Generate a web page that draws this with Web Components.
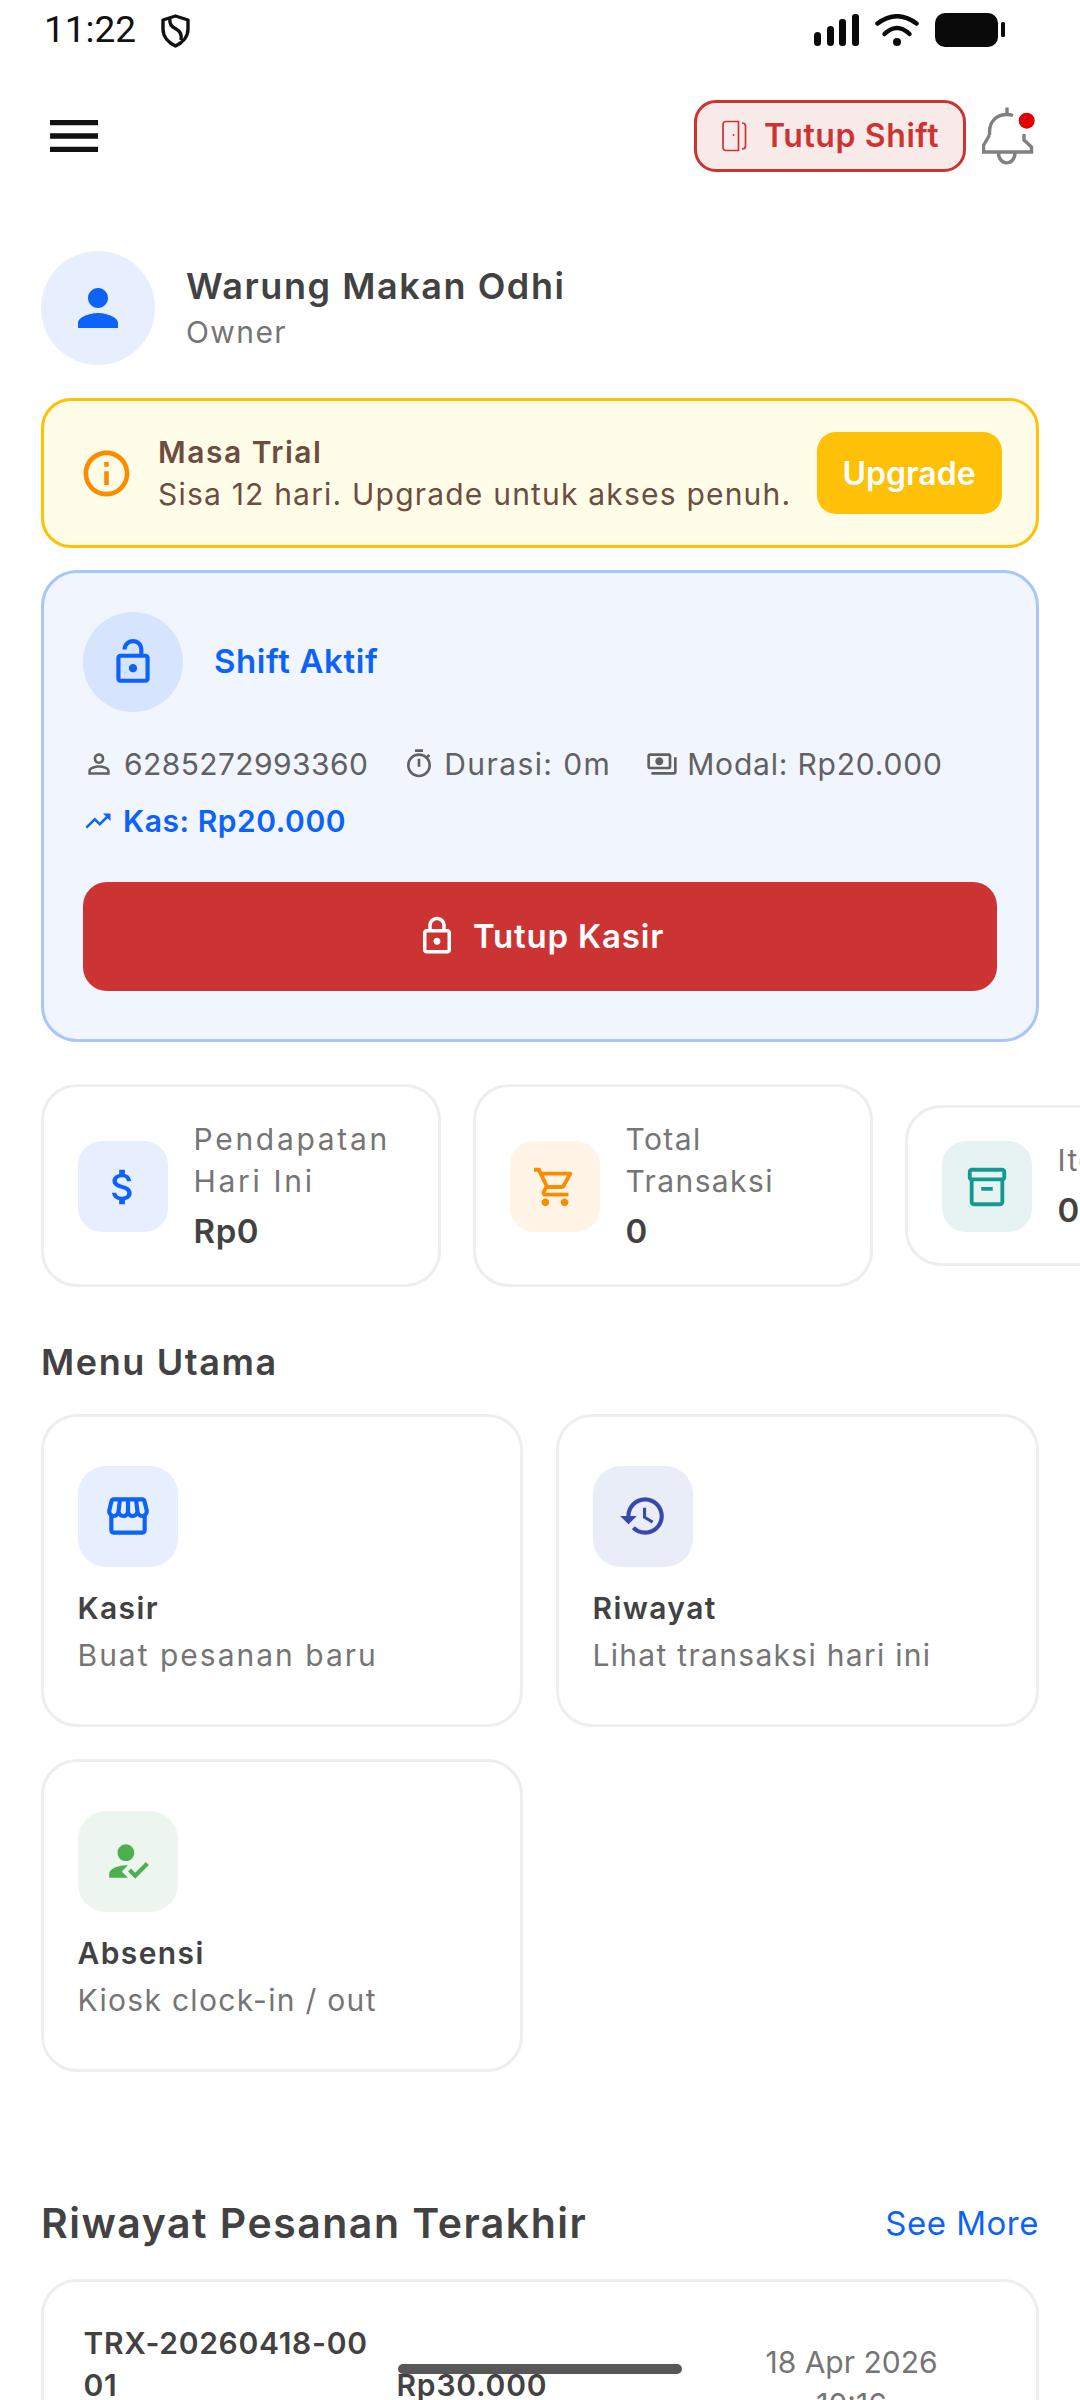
<!DOCTYPE html>
<html lang="id">
<head>
<meta charset="utf-8">
<title>Warung Makan Odhi</title>
<style>
  html, body { margin: 0; padding: 0; background: #fff; }
  body { width: 1080px; height: 2400px; overflow: hidden; font-family: Inter, "Noto Sans", sans-serif; color: #424242; }
</style>
</head>
<body>
<dash-page>
  <status-bar></status-bar>
  <top-bar></top-bar>
  <profile-row name="Warung Makan Odhi" role="Owner"></profile-row>
  <trial-banner></trial-banner>
  <shift-card></shift-card>
  <stat-row>
    <stat-card icon="money" tone="#0d62f8" bg="#e7effe" label="Pendapatan Hari Ini" value="Rp0" ls="2.7"></stat-card>
    <stat-card icon="cart" tone="#fb8c00" bg="#fff4e5" label="Total Transaksi" value="0" ls="1.4"></stat-card>
    <stat-card icon="box" tone="#139a8e" bg="#e7f3f3" label="Item Terjual" value="0" ls="1.4"></stat-card>
  </stat-row>
  <section-head size="small" title="Menu Utama" style="margin-top:50px"></section-head>
  <menu-grid>
    <menu-card icon="store" tone="#0d62f8" bg="#e7effe" title="Kasir" desc="Buat pesanan baru" ls="2"></menu-card>
    <menu-card icon="history" tone="#3949ab" bg="#e9edf7" title="Riwayat" desc="Lihat transaksi hari ini" ls="1.3"></menu-card>
    <menu-card icon="reg" tone="#4caf50" bg="#edf6ee" title="Absensi" desc="Kiosk clock-in / out" ls="1.3"></menu-card>
  </menu-grid>
  <section-head title="Riwayat Pesanan Terakhir" link="See More" style="margin-top:123px"></section-head>
  <order-card code="TRX-20260418-0001" total="Rp30.000" date="18 Apr 2026" time="10:16"></order-card>
  <home-pill></home-pill>
</dash-page>

<script>
const ICONS = {
  menu: 'M3 18h18v-2H3v2zm0-5h18v-2H3v2zm0-7v2h18V6H3z',
  person: 'M12 12c2.21 0 4-1.79 4-4s-1.79-4-4-4-4 1.79-4 4 1.79 4 4 4zm0 2c-2.67 0-8 1.34-8 4v2h16v-2c0-2.66-5.33-4-8-4z',
  personLine: 'M12 5.9c1.16 0 2.1.94 2.1 2.1s-.94 2.1-2.1 2.1S9.9 9.16 9.9 8s.94-2.1 2.1-2.1m0 9c2.97 0 6.1 1.46 6.1 2.1v1.1H5.9V17c0-.64 3.13-2.1 6.1-2.1M12 4C9.79 4 8 5.79 8 8s1.79 4 4 4 4-1.79 4-4-1.79-4-4-4zm0 9c-2.67 0-8 1.34-8 4v3h16v-3c0-2.66-5.33-4-8-4z',
  info: 'M11 7h2v2h-2zm0 4h2v6h-2zm1-9C6.48 2 2 6.48 2 12s4.48 10 10 10 10-4.48 10-10S17.52 2 12 2zm0 18c-4.41 0-8-3.59-8-8s3.59-8 8-8 8 3.59 8 8-3.59 8-8 8z',
  lockOpen: 'M12 17c1.1 0 2-.9 2-2s-.9-2-2-2-2 .9-2 2 .9 2 2 2zm6-9h-1V6c0-2.76-2.24-5-5-5S7 3.24 7 6h2c0-1.66 1.34-3 3-3s3 1.34 3 3v2H6c-1.1 0-2 .9-2 2v10c0 1.1.9 2 2 2h12c1.1 0 2-.9 2-2V10c0-1.1-.9-2-2-2zm0 12H6V10h12v10z',
  lock: 'M18 8h-1V6c0-2.76-2.24-5-5-5S7 3.24 7 6v2H6c-1.1 0-2 .9-2 2v10c0 1.1.9 2 2 2h12c1.1 0 2-.9 2-2V10c0-1.1-.9-2-2-2zM9 6c0-1.66 1.34-3 3-3s3 1.34 3 3v2H9V6zm9 14H6V10h12v10zm-6-3c1.1 0 2-.9 2-2s-.9-2-2-2-2 .9-2 2 .9 2 2 2z',
  timer: 'M15 1H9v2h6V1zm-4 13h2V8h-2v6zm8.03-6.61l1.42-1.42c-.43-.51-.9-.99-1.41-1.41l-1.42 1.42C16.07 4.74 14.12 4 12 4c-4.97 0-9 4.03-9 9s4.02 9 9 9 9-4.03 9-9c0-2.12-.74-4.07-1.97-5.61zM12 20c-3.87 0-7-3.13-7-7s3.13-7 7-7 7 3.13 7 7-3.13 7-7 7z',
  payments: 'M19 14V6c0-1.1-.9-2-2-2H3c-1.1 0-2 .9-2 2v8c0 1.1.9 2 2 2h14c1.1 0 2-.9 2-2zm-2 0H3V6h14v8zm-7-7c-1.66 0-3 1.34-3 3s1.34 3 3 3 3-1.34 3-3-1.34-3-3-3zm13 0v11c0 1.1-.9 2-2 2H4v-2h17V7h2z',
  trend: 'M16 6l2.29 2.29-4.88 4.88-4-4L2 16.59 3.41 18l6-6 4 4 6.3-6.29L22 12V6z',
  money: 'M11.8 10.9c-2.27-.59-3-1.2-3-2.15 0-1.09 1.01-1.85 2.7-1.85 1.78 0 2.44.85 2.5 2.1h2.21c-.07-1.72-1.12-3.3-3.21-3.81V3h-3v2.16c-1.94.42-3.5 1.68-3.5 3.61 0 2.31 1.91 3.46 4.7 4.13 2.5.6 3 1.48 3 2.41 0 .69-.49 1.79-2.7 1.79-2.06 0-2.87-.92-2.98-2.1h-2.2c.12 2.19 1.76 3.42 3.68 3.83V21h3v-2.15c1.95-.37 3.5-1.5 3.5-3.55 0-2.84-2.43-3.81-4.7-4.4z',
  cart: 'M15.55 13c.75 0 1.41-.41 1.75-1.03l3.58-6.49c.37-.66-.11-1.48-.87-1.48H5.21l-.94-2H1v2h2l3.6 7.59-1.35 2.44C4.52 15.37 5.48 17 7 17h12v-2H7l1.1-2h7.45zM6.16 6h12.15l-2.76 5H8.53L6.16 6zM7 18c-1.1 0-1.99.9-1.99 2S5.9 22 7 22s2-.9 2-2-.9-2-2-2zm10 0c-1.1 0-1.99.9-1.99 2s.89 2 1.99 2 2-.9 2-2-.9-2-2-2z',
  box: 'M20 2H4c-1 0-2 .9-2 2v3.01c0 .72.43 1.34 1 1.69V20c0 1.1 1.1 2 2 2h14c.9 0 2-.9 2-2V8.7c.57-.35 1-.97 1-1.69V4c0-1.1-1-2-2-2zm-1 18H5V9h14v11zm1-13H4V4h16v3zM9 12h6v2H9z',
  store: 'M21.9 8.89l-1.05-4.37c-.22-.9-1-1.52-1.91-1.52H5.05c-.9 0-1.69.63-1.9 1.52L2.1 8.89c-.24 1.02-.02 2.06.62 2.88.08.11.19.19.28.29V19c0 1.1.9 2 2 2h14c1.1 0 2-.9 2-2v-6.94c.09-.09.2-.18.28-.28.64-.82.87-1.87.62-2.89zm-2.99-3.9l1.05 4.37c.1.42.01.84-.25 1.17-.14.18-.44.47-.94.47-.61 0-1.14-.49-1.21-1.14L16.98 5l1.93-.01zM13 5h1.96l.54 4.52c.05.39-.07.78-.33 1.07-.22.26-.54.41-.95.41-.67 0-1.22-.59-1.22-1.31V5zM8.49 9.52L9.04 5H11v4.69c0 .72-.55 1.31-1.29 1.31-.34 0-.65-.15-.89-.41-.25-.29-.37-.68-.33-1.07zm-4.45-.16L5.05 5h1.97l-.58 4.86c-.08.65-.6 1.14-1.21 1.14-.49 0-.8-.29-.93-.47-.27-.32-.36-.75-.26-1.17zM5 19v-6.03c.08.01.15.03.23.03.87 0 1.66-.36 2.24-.95.6.6 1.4.95 2.31.95.87 0 1.65-.36 2.23-.93.59.57 1.39.93 2.29.93.84 0 1.64-.35 2.24-.95.58.59 1.37.95 2.24.95.08 0 .15-.02.23-.03V19H5z',
  history: 'M13 3c-4.97 0-9 4.03-9 9H1l3.89 3.89.07.14L9 12H6c0-3.87 3.13-7 7-7s7 3.13 7 7-3.13 7-7 7c-1.93 0-3.68-.79-4.94-2.06l-1.42 1.42C8.27 19.99 10.51 21 13 21c4.97 0 9-4.03 9-9s-4.03-9-9-9zm-1 5v5l4.28 2.54.72-1.21-3.5-2.08V8H12z',
  reg: 'M9 17l3-2.94c-.39-.04-.68-.06-1-.06-2.67 0-8 1.34-8 4v2h9l-3-3zm2-5c2.21 0 4-1.79 4-4s-1.79-4-4-4-4 1.79-4 4 1.79 4 4 4m4.47 8.5L12 17l1.4-1.41 2.07 2.08 5.13-5.17 1.4 1.41z',
};

class UiIcon extends HTMLElement {
  connectedCallback() {
    const size = this.getAttribute('size') || 24;
    this.attachShadow({ mode: 'open' }).innerHTML = `
      <style>
        :host { display: inline-flex; flex: none; width: ${size}px; height: ${size}px; color: inherit; }
        svg { display: block; width: 100%; height: 100%; fill: currentColor; }
      </style>
      <svg viewBox="0 0 24 24"><path d="${ICONS[this.getAttribute('name')]}"/></svg>`;
  }
}
customElements.define('ui-icon', UiIcon);

class DashPage extends HTMLElement {
  constructor() {
    super();
    this.attachShadow({ mode: 'open' }).innerHTML = `
      <style>
        :host { display: block; position: relative; width: 1080px; height: 2400px; overflow: hidden; background: #fff; }
      </style>
      <slot></slot>`;
  }
}
customElements.define('dash-page', DashPage);

class StatusBar extends HTMLElement {
  constructor() {
    super();
    this.attachShadow({ mode: 'open' }).innerHTML = `
      <style>
        :host { display: flex; align-items: center; height: 60px; padding: 0 75px 4px 44px; box-sizing: content-box; color: #111; }
        .time { font: 400 37px/60px Roboto, sans-serif; }
        .shield { margin-left: 25px; margin-top: 2px; }
        .right { margin-left: auto; display: flex; align-items: center; gap: 16px; }
        svg { display: block; }
      </style>
      <span class="time">11:22</span>
      <svg class="shield" width="29" height="34" viewBox="0 0 29 34" fill="none" stroke="#111" stroke-width="3.4" stroke-linejoin="round">
        <path d="M14.5 2 27 6v9c0 8-6 14-12.500 17C8 29 2 23 2 15V6z"/>
        <path d="M9 5c-1 5 2 8 6 10s6 5 5 11"/>
      </svg>
      <div class="right">
        <svg width="45" height="32" viewBox="0 0 45 32" fill="#0a0a0a">
          <rect x="0" y="18" width="7" height="14" rx="3.5"/>
          <rect x="13" y="12" width="7" height="20" rx="3.500"/>
          <rect x="25" y="5" width="7" height="27" rx="3"/>
          <rect x="38" y="0" width="7" height="32" rx="3"/>
        </svg>
        <svg width="44" height="32" viewBox="0 0 44 32" fill="none" stroke="#0a0a0a" stroke-width="4.5" stroke-linecap="round">
          <path d="M2.500 9.500Q22-5 41.500 9.500"/>
          <path d="M9.500 20Q22 8 34.500 20"/>
          <circle cx="22" cy="28" r="4" fill="#0a0a0a" stroke="none"/>
        </svg>
        <svg width="70" height="34" viewBox="0 0 70 34" fill="#0a0a0a">
          <rect x="0" y="0" width="63" height="34" rx="10"/>
          <rect x="66" y="9" width="4" height="15" rx="1.500"/>
        </svg>
      </div>`;
  }
}
customElements.define('status-bar', StatusBar);

class TopBar extends HTMLElement {
  constructor() {
    super();
    this.attachShadow({ mode: 'open' }).innerHTML = `
      <style>
        :host { display: flex; align-items: center; margin-top: 36px; padding: 0 44px 0 42px; height: 72px; color: #111; }
        .right { margin-left: auto; display: flex; align-items: center; gap: 16px; }
        button {
          display: flex; align-items: center; justify-content: center; gap: 17px;
          width: 272px; height: 72px; padding: 0; box-sizing: border-box;
          background: #f9eaea; color: #cc3333; border: 3px solid #cc3333; border-radius: 22px;
          font: 600 32px/40px Inter, "Noto Sans", sans-serif; letter-spacing: .6px;
        }
        svg { display: block; }
      </style>
      <ui-icon name="menu" size="64"></ui-icon>
      <div class="right">
        <button>
          <svg width="26" height="32" viewBox="0 0 26 32" fill="none" stroke="#cc3333" stroke-width="1.700">
            <path d="M5 1.500h12.500v29H5a3 3 0 0 1-3-3v-23a3 3 0 0 1 3-3z"/>
            <circle cx="12.500" cy="15" r="1" fill="#cc3333" stroke="none"/>
            <path d="M21 3c2.300 0 3.500 1 3.500 3v20c0 2-1.200 3-3.500 3"/>
          </svg>
          <span>Tutup Shift</span>
        </button>
        <svg width="54" height="58" viewBox="0 0 54 58" fill="none" stroke="#808080" stroke-width="3.400">
          <path d="M25 .5V7M7.500 28v-3C7.500 14 15 7.500 25 7.500c2 0 4 .3 6 1M7.500 28 1.500 38.500V45h48v-5L42 33v-6"/>
          <path d="M16.500 45c-.5 14.500 17 14.500 16.500 0"/>
          <circle cx="44.700" cy="13.700" r="8" fill="#e00000" stroke="none"/>
        </svg>
      </div>`;
  }
}
customElements.define('top-bar', TopBar);

class ProfileRow extends HTMLElement {
  connectedCallback() {
    this.attachShadow({ mode: 'open' }).innerHTML = `
      <style>
        :host { display: flex; align-items: center; gap: 31px; margin-top: 79px; padding: 0 41px; }
        .avatar { width: 114px; height: 114px; border-radius: 50%; background: #e7effe; color: #0d62f8; display: flex; align-items: center; justify-content: center; }
        .name { font-size: 36px; line-height: 46px; font-weight: 600; color: #424242; letter-spacing: 1.55px; margin-top: -1px; }
        .role { font-size: 30px; line-height: 42px; color: #757575; letter-spacing: 1.4px; margin-top: 2px; }
      </style>
      <div class="avatar"><ui-icon name="person" size="60"></ui-icon></div>
      <div>
        <div class="name">${this.getAttribute('name')}</div>
        <div class="role">${this.getAttribute('role')}</div>
      </div>`;
  }
}
customElements.define('profile-row', ProfileRow);

class TrialBanner extends HTMLElement {
  constructor() {
    super();
    this.attachShadow({ mode: 'open' }).innerHTML = `
      <style>
        :host {
          display: flex; align-items: center; box-sizing: border-box; height: 150px; margin: 33px 41px 0;
          padding: 0 34.500px 0 35px; background: #fffde7; border: 3px solid #ffc107; border-radius: 30px; color: #6d4c41;
        }
        ui-icon { color: #fb8c00; }
        .text { margin-left: 24px; flex: 1; font-size: 30px; line-height: 42px; letter-spacing: 1.2px; }
        .title { font-weight: 600; letter-spacing: 1.5px; }
        .up { width: 185px; height: 82px; border-radius: 19px; background: #ffc107; color: #fff; font-size: 32px; font-weight: 600; display: flex; align-items: center; justify-content: center; }
      </style>
      <ui-icon name="info" size="55"></ui-icon>
      <div class="text">
        <div class="title">Masa Trial</div>
        <div>Sisa 12 hari. Upgrade untuk akses penuh.</div>
      </div>
      <div class="up">Upgrade</div>`;
  }
}
customElements.define('trial-banner', TrialBanner);

class ShiftCard extends HTMLElement {
  constructor() {
    super();
    this.attachShadow({ mode: 'open' }).innerHTML = `
      <style>
        :host {
          display: block; box-sizing: border-box; height: 472px; margin: 22px 41px 0; padding: 39px 39px 0;
          background: #f0f5fe; border: 3px solid #a8c6fb; border-radius: 36px;
        }
        .head { display: flex; align-items: center; gap: 31px; color: #0d62f8; font-size: 33px; line-height: 40px; font-weight: 600; letter-spacing: .6px; }
        .head span { margin-top: -2px; }
        .circle { width: 100px; height: 100px; border-radius: 50%; background: #d6e4fd; display: flex; align-items: center; justify-content: center; }
        .meta { display: flex; flex-wrap: wrap; align-items: center; margin-top: 31px; color: #616161; font-size: 30px; line-height: 42px; }
        .item { display: flex; align-items: center; gap: 9px; margin-right: 35px; white-space: nowrap; }
        .kas { display: flex; align-items: center; gap: 10px; margin-top: 15px; color: #0d62f8; font-size: 30px; line-height: 42px; font-weight: 600; letter-spacing: .55px; }
        button {
          display: flex; align-items: center; justify-content: center; gap: 15px; width: 100%; height: 109px; margin-top: 40px; padding: 0 0 2px;
          background: #cc3333; color: #fff; border: 0; border-radius: 24px; font: 600 33px/40px Inter, "Noto Sans", sans-serif; letter-spacing: .8px;
        }
      </style>
      <div class="head">
        <div class="circle"><ui-icon name="lockOpen" size="50"></ui-icon></div>
        <span>Shift Aktif</span>
      </div>
      <div class="meta">
        <span class="item" style="letter-spacing:.4px"><ui-icon name="personLine" size="32"></ui-icon>6285272993360</span>
        <span class="item" style="letter-spacing:1.4px"><ui-icon name="timer" size="32"></ui-icon>Durasi: 0m</span>
        <span class="item" style="letter-spacing:.8px;margin-right:0"><ui-icon name="payments" size="32"></ui-icon>Modal: Rp20.000</span>
      </div>
      <div class="kas"><ui-icon name="trend" size="30"></ui-icon>Kas: Rp20.000</div>
      <button><ui-icon name="lock" size="42"></ui-icon>Tutup Kasir</button>`;
  }
}
customElements.define('shift-card', ShiftCard);

class StatRow extends HTMLElement {
  constructor() {
    super();
    this.attachShadow({ mode: 'open' }).innerHTML = `
      <style>
        :host { display: flex; align-items: center; gap: 32px; margin-top: 42px; padding-left: 41px; width: 1600px; }
      </style>
      <slot></slot>`;
  }
}
customElements.define('stat-row', StatRow);

class StatCard extends HTMLElement {
  connectedCallback() {
    this.attachShadow({ mode: 'open' }).innerHTML = `
      <style>
        :host {
          display: flex; align-items: center; gap: 26px; box-sizing: border-box; flex: none; width: 400px;
          padding: 30.500px 23px 28.500px 33.500px; background: #fff; border: 3px solid #eeeeee; border-radius: 36px;
        }
        .tile { flex: none; width: 90px; height: 91px; border-radius: 24px; display: flex; align-items: center; justify-content: center; color: ${this.getAttribute('tone')}; background: ${this.getAttribute('bg')}; }
        .label { font-size: 30px; line-height: 42px; color: #757575; letter-spacing: ${this.getAttribute('ls')}px; }
        .value { margin-top: 4px; font-size: 33px; line-height: 50px; font-weight: 600; color: #424242; letter-spacing: .6px; }
        .col { width: 220px; }
      </style>
      <div class="tile"><ui-icon name="${this.getAttribute('icon')}" size="46"></ui-icon></div>
      <div class="col">
        <div class="label">${this.getAttribute('label')}</div>
        <div class="value">${this.getAttribute('value')}</div>
      </div>`;
  }
}
customElements.define('stat-card', StatCard);

class SectionHead extends HTMLElement {
  connectedCallback() {
    const small = this.getAttribute('size') === 'small';
    const link = this.getAttribute('link');
    this.attachShadow({ mode: 'open' }).innerHTML = `
      <style>
        :host { display: flex; align-items: center; justify-content: space-between; padding: 0 41px; }
        h2 { margin: 0; font-size: ${small ? 36 : 41}px; line-height: ${small ? 50 : 56}px; font-weight: 600; color: #424242; letter-spacing: ${small ? 1.6 : 1.5}px; }
        a { font-size: 33px; color: #0d62f8; letter-spacing: .5px; }
      </style>
      <h2>${this.getAttribute('title')}</h2>
      ${link ? `<a>${link}</a>` : ''}`;
  }
}
customElements.define('section-head', SectionHead);

class MenuGrid extends HTMLElement {
  constructor() {
    super();
    this.attachShadow({ mode: 'open' }).innerHTML = `
      <style>
        :host { display: grid; grid-template-columns: 482px 483px; column-gap: 33px; row-gap: 32px; grid-auto-rows: 313px; margin-top: 27px; padding: 0 41px; }
      </style>
      <slot></slot>`;
  }
}
customElements.define('menu-grid', MenuGrid);

class MenuCard extends HTMLElement {
  connectedCallback() {
    this.attachShadow({ mode: 'open' }).innerHTML = `
      <style>
        :host { display: block; box-sizing: border-box; padding: 48.500px 33.500px 0; background: #fff; border: 3px solid #eeeeee; border-radius: 36px; }
        .tile { width: 100px; height: 101px; border-radius: 28px; display: flex; align-items: center; justify-content: center; color: ${this.getAttribute('tone')}; background: ${this.getAttribute('bg')}; }
        .title { margin-top: 20px; font-size: 30px; line-height: 42px; font-weight: 600; color: #424242; letter-spacing: 1.4px; }
        .desc { margin-top: 5px; font-size: 30px; line-height: 42px; color: #757575; letter-spacing: ${this.getAttribute('ls')}px; }
      </style>
      <div class="tile"><ui-icon name="${this.getAttribute('icon')}" size="50"></ui-icon></div>
      <div class="title">${this.getAttribute('title')}</div>
      <div class="desc">${this.getAttribute('desc')}</div>`;
  }
}
customElements.define('menu-card', MenuCard);

class OrderCard extends HTMLElement {
  connectedCallback() {
    this.attachShadow({ mode: 'open' }).innerHTML = `
      <style>
        :host {
          display: flex; align-items: center; box-sizing: border-box; margin: 28px 41px 0; padding: 39.500px 40.500px 40px 39.500px;
          background: #fff; border: 3px solid #eeeeee; border-radius: 36px; font-size: 30px; line-height: 42px;
        }
        .code { width: 290px; min-height: 126px; margin-right: 23px; font-weight: 600; color: #424242; word-break: break-all; letter-spacing: .7px; }
        .total { width: 311px; font-weight: 600; color: #424242; letter-spacing: .8px; }
        .when { flex: 1; text-align: center; color: #757575; margin-top: -3px; }
      </style>
      <div class="code">${this.getAttribute('code')}</div>
      <div class="total">${this.getAttribute('total')}</div>
      <div class="when">${this.getAttribute('date')}<br>${this.getAttribute('time')}</div>`;
  }
}
customElements.define('order-card', OrderCard);

class HomePill extends HTMLElement {
  constructor() {
    super();
    this.attachShadow({ mode: 'open' }).innerHTML = `
      <style>
        :host { position: absolute; left: 398px; top: 2364px; width: 284px; height: 10px; border-radius: 5px; background: #585858; }
      </style>`;
  }
}
customElements.define('home-pill', HomePill);
</script>
</body>
</html>
